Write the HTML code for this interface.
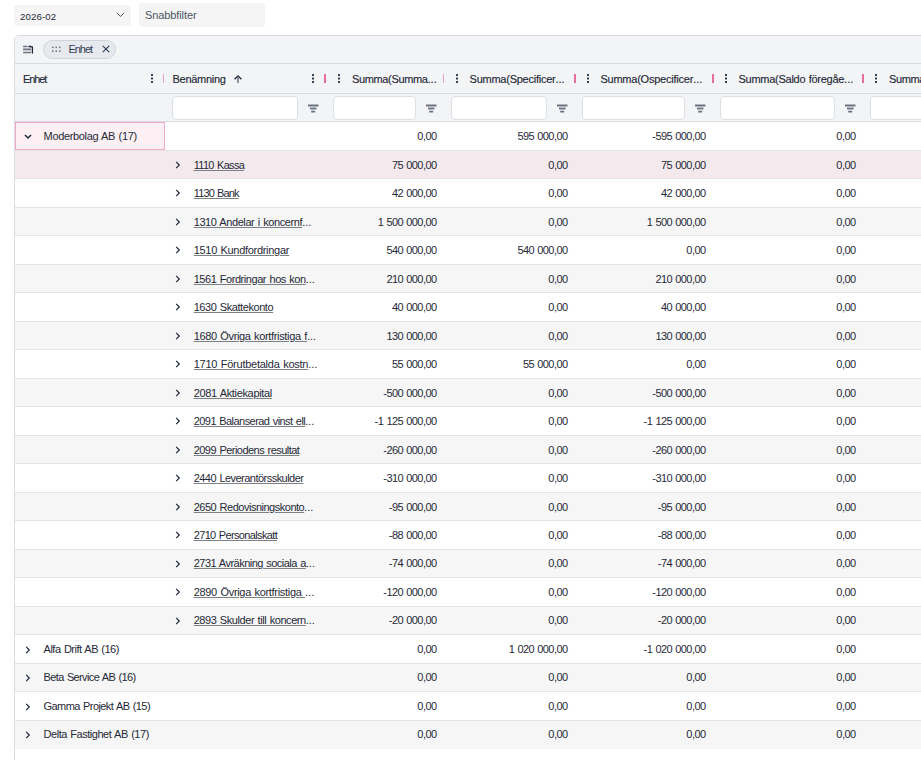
<!DOCTYPE html><html><head><meta charset="utf-8"><style>
*{box-sizing:border-box;margin:0;padding:0}
html,body{width:921px;height:760px;overflow:hidden;background:#fff}
body{position:relative;font-family:"Liberation Sans",sans-serif;color:#1f2937}
.a{position:absolute}
.sel{left:14px;top:5px;width:117px;height:21px;background:#f5f5f5;border-radius:3px}
.sel span{position:absolute;left:6px;top:5.9px;font-size:9.6px;line-height:12px;color:#1f2937}
.qf{left:139px;top:3px;width:126px;height:24px;background:#f5f5f5;border-radius:3px}
.qf span{position:absolute;left:6px;top:6px;font-size:11px;line-height:13px;color:#4b5563}
.grid{left:14px;top:35px;width:940px;height:760px;border:1px solid #d9dce0;border-radius:5px 0 0 0;background:#fff;overflow:hidden}
.bar{left:0;width:100%;background:#f3f4f6;border-bottom:1px solid #d9dce0}
.chip{left:27.8px;top:3.8px;width:72.8px;height:18.8px;border:1px solid #cfd4da;background:#e6e9ed;border-radius:10px}
.hd{font-size:11px;line-height:13px;color:#1f2937;-webkit-text-stroke:0.15px #1f2937;white-space:nowrap;word-spacing:0.6px}
.fin{top:60px;height:24px;background:#fff;border:1px solid #dcdfe3;border-radius:4px}
.row{left:0;width:100%;border-bottom:1px solid #e3e5e9}
.odd{background:#f6f6f6}
.last{border-bottom:0}
.hov{background:#f4e9ed}
.t{font-size:11px;line-height:13px;white-space:nowrap;color:#1f2937;word-spacing:0.8px}
.u{text-decoration:underline;text-decoration-color:#7b8089;text-underline-offset:1px}
.pk{width:2px;height:9px;background:#e86d9f}
</style></head><body>
<div class="a sel"><span style="letter-spacing:0.166px;">2026-02</span><svg class="a" style="left:102px;top:7px" width="9" height="6" viewBox="0 0 9 6"><path d="M0.8 0.9 L4.5 4.4 L8.2 0.9" fill="none" stroke="#3b4658" stroke-width="0.9"/></svg></div>
<div class="a qf"><span style="letter-spacing:-0.100px;">Snabbfilter</span></div>
<div class="a grid">
<div class="a bar" style="top:0;height:28.00px">
<svg class="a" style="left:7.9px;top:8.5px" width="12" height="10" viewBox="0 0 12 10"><path d="M0.1 1.5H3.9" stroke="#6b7280" stroke-width="1.7"/><path d="M3.9 1.5H6" stroke="#9aa1ab" stroke-width="1.5"/><path d="M0.1 4.4H8M0.1 7.5H8" stroke="#6b7280" stroke-width="1.7"/><circle cx="6.8" cy="1.5" r="0.9" fill="#1e293b"/><path d="M6.8 1.3L9.4 2V8" fill="none" stroke="#1e293b" stroke-width="1.3" stroke-linecap="round"/></svg>
<div class="a chip">
<svg class="a" style="left:8.4px;top:5.1px" width="9" height="7" viewBox="0 0 9 7"><g fill="#6b7280"><rect x="0" y="0.6" width="1.5" height="1.5"/><rect x="3.5" y="0.6" width="1.5" height="1.5"/><rect x="7" y="0.6" width="1.5" height="1.5"/><rect x="0" y="4.4" width="1.5" height="1.5"/><rect x="3.5" y="4.4" width="1.5" height="1.5"/><rect x="7" y="4.4" width="1.5" height="1.5"/></g></svg>
<span class="a t" style="left:24.7px;top:2.3px;color:#334155;letter-spacing:-1.050px;">Enhet</span>
<svg class="a" style="left:58.2px;top:3.9px" width="8" height="8" viewBox="0 0 8 8"><path d="M0.8 0.8L7.2 7.2M7.2 0.8L0.8 7.2" stroke="#334155" stroke-width="1.2"/></svg>
</div></div>
<div class="a bar" style="top:28.00px;height:29.50px"></div>
<span class="a hd" style="left:8.00px;top:37.00px;letter-spacing:-1.104px;">Enhet</span>
<svg class="a" style="left:136.00px;top:38.00px" width="2" height="9" viewBox="0 0 2 9"><g fill="#334155"><rect x="0" y="0" width="2" height="2"/><rect x="0" y="3.5" width="2" height="2"/><rect x="0" y="7" width="2" height="2"/></g></svg>
<div class="a pk" style="left:148.00px;top:38.00px;width:1px;background:#eba3c0"></div>
<span class="a hd" style="left:157.50px;top:37.00px;letter-spacing:-0.274px;">Benämning</span>
<svg class="a" style="left:219.00px;top:38.80px" width="8" height="9" viewBox="0 0 8 9"><path d="M0.6 4.3L4 0.9L7.4 4.3" fill="none" stroke="#1e293b" stroke-width="1.3"/><path d="M4 1.5V8" stroke="#6b7280" stroke-width="1.5"/></svg>
<svg class="a" style="left:296.80px;top:38.00px" width="2" height="9" viewBox="0 0 2 9"><g fill="#334155"><rect x="0" y="0" width="2" height="2"/><rect x="0" y="3.5" width="2" height="2"/><rect x="0" y="7" width="2" height="2"/></g></svg>
<div class="a pk" style="left:309.00px;top:38.00px"></div>
<svg class="a" style="left:322.80px;top:38.00px" width="2" height="9" viewBox="0 0 2 9"><g fill="#334155"><rect x="0" y="0" width="2" height="2"/><rect x="0" y="3.5" width="2" height="2"/><rect x="0" y="7" width="2" height="2"/></g></svg>
<span class="a hd" style="left:337.00px;top:37.00px;letter-spacing:-0.355px;">Summa(Summa<span style="letter-spacing:0">...</span></span>
<div class="a pk" style="left:427.50px;top:38.00px;width:1px;background:#eba3c0"></div>
<svg class="a" style="left:440.80px;top:38.00px" width="2" height="9" viewBox="0 0 2 9"><g fill="#334155"><rect x="0" y="0" width="2" height="2"/><rect x="0" y="3.5" width="2" height="2"/><rect x="0" y="7" width="2" height="2"/></g></svg>
<span class="a hd" style="left:454.60px;top:37.00px;letter-spacing:-0.252px;">Summa(Specificer<span style="letter-spacing:0">...</span></span>
<div class="a pk" style="left:558.50px;top:38.00px"></div>
<svg class="a" style="left:571.80px;top:38.00px" width="2" height="9" viewBox="0 0 2 9"><g fill="#334155"><rect x="0" y="0" width="2" height="2"/><rect x="0" y="3.5" width="2" height="2"/><rect x="0" y="7" width="2" height="2"/></g></svg>
<span class="a hd" style="left:585.40px;top:37.00px;letter-spacing:-0.223px;">Summa(Ospecificer<span style="letter-spacing:0">...</span></span>
<div class="a pk" style="left:696.50px;top:38.00px"></div>
<svg class="a" style="left:709.80px;top:38.00px" width="2" height="9" viewBox="0 0 2 9"><g fill="#334155"><rect x="0" y="0" width="2" height="2"/><rect x="0" y="3.5" width="2" height="2"/><rect x="0" y="7" width="2" height="2"/></g></svg>
<span class="a hd" style="left:723.50px;top:37.00px;letter-spacing:-0.267px;">Summa(Saldo föregåe<span style="letter-spacing:0">...</span></span>
<div class="a pk" style="left:846.50px;top:38.00px"></div>
<svg class="a" style="left:859.80px;top:38.00px" width="2" height="9" viewBox="0 0 2 9"><g fill="#334155"><rect x="0" y="0" width="2" height="2"/><rect x="0" y="3.5" width="2" height="2"/><rect x="0" y="7" width="2" height="2"/></g></svg>
<span class="a hd" style="left:874.00px;top:37.00px;letter-spacing:-0.400px;">Summa(Saldo</span>
<div class="a bar" style="top:57.50px;height:28.50px"></div>
<div class="a fin" style="left:157.00px;width:125.50px"></div>
<svg class="a" style="left:292.50px;top:67.50px" width="11" height="9" viewBox="0 0 11 9"><g fill="#6b7280"><rect x="0" y="0.5" width="10.5" height="2"/><rect x="2" y="3.6" width="6.5" height="1.8"/><rect x="3.2" y="6.7" width="4" height="1.8"/></g></svg>
<div class="a fin" style="left:318.00px;width:82.50px"></div>
<svg class="a" style="left:410.50px;top:67.50px" width="11" height="9" viewBox="0 0 11 9"><g fill="#6b7280"><rect x="0" y="0.5" width="10.5" height="2"/><rect x="2" y="3.6" width="6.5" height="1.8"/><rect x="3.2" y="6.7" width="4" height="1.8"/></g></svg>
<div class="a fin" style="left:436.00px;width:95.50px"></div>
<svg class="a" style="left:541.50px;top:67.50px" width="11" height="9" viewBox="0 0 11 9"><g fill="#6b7280"><rect x="0" y="0.5" width="10.5" height="2"/><rect x="2" y="3.6" width="6.5" height="1.8"/><rect x="3.2" y="6.7" width="4" height="1.8"/></g></svg>
<div class="a fin" style="left:567.00px;width:102.50px"></div>
<svg class="a" style="left:679.50px;top:67.50px" width="11" height="9" viewBox="0 0 11 9"><g fill="#6b7280"><rect x="0" y="0.5" width="10.5" height="2"/><rect x="2" y="3.6" width="6.5" height="1.8"/><rect x="3.2" y="6.7" width="4" height="1.8"/></g></svg>
<div class="a fin" style="left:705.00px;width:114.50px"></div>
<svg class="a" style="left:829.50px;top:67.50px" width="11" height="9" viewBox="0 0 11 9"><g fill="#6b7280"><rect x="0" y="0.5" width="10.5" height="2"/><rect x="2" y="3.6" width="6.5" height="1.8"/><rect x="3.2" y="6.7" width="4" height="1.8"/></g></svg>
<div class="a fin" style="left:855.00px;width:114.50px"></div>
<svg class="a" style="left:979.50px;top:67.50px" width="11" height="9" viewBox="0 0 11 9"><g fill="#6b7280"><rect x="0" y="0.5" width="10.5" height="2"/><rect x="2" y="3.6" width="6.5" height="1.8"/><rect x="3.2" y="6.7" width="4" height="1.8"/></g></svg>
<div class="a row" style="top:86.00px;height:29px">
<div class="a" style="left:0;top:0;width:150px;height:28px;background:#fcf0f4;border:1px solid #eeaac7"></div>
<svg class="a" style="left:9px;top:12.00px" width="8" height="6" viewBox="0 0 8 6"><path d="M1 1L4 4L7 1" fill="none" stroke="#1e293b" stroke-width="1.5"/></svg>
<span class="a t" style="left:28.60px;top:8.14px;letter-spacing:-0.348px;">Moderbolag AB (17)</span>
<span class="a t" style="right:517.00px;top:8.14px;letter-spacing:-0.55px;word-spacing:0.6px;margin-right:-0.55px">0,00</span>
<span class="a t" style="right:386.00px;top:8.14px;letter-spacing:-0.55px;word-spacing:0.6px;margin-right:-0.55px">595 000,00</span>
<span class="a t" style="right:248.00px;top:8.14px;letter-spacing:-0.55px;word-spacing:0.6px;margin-right:-0.55px">-595 000,00</span>
<span class="a t" style="right:98.00px;top:8.14px;letter-spacing:-0.55px;word-spacing:0.6px;margin-right:-0.55px">0,00</span>
<span class="a t" style="left:985.00px;top:8.14px">0,00</span>
</div>
<div class="a row hov" style="top:115.00px;height:28px">
<svg class="a" style="left:159.80px;top:9.99px" width="6" height="8" viewBox="0 0 6 8"><path d="M1.2 0.8L4.3 4L1.2 7.2" fill="none" stroke="#1e293b" stroke-width="1.2"/></svg>
<span class="a t" style="left:178.70px;top:7.63px;letter-spacing:-0.680px;"><span class="u">1110 Kassa</span></span>
<span class="a t" style="right:517.00px;top:7.63px;letter-spacing:-0.55px;word-spacing:0.6px;margin-right:-0.55px">75 000,00</span>
<span class="a t" style="right:386.00px;top:7.63px;letter-spacing:-0.55px;word-spacing:0.6px;margin-right:-0.55px">0,00</span>
<span class="a t" style="right:248.00px;top:7.63px;letter-spacing:-0.55px;word-spacing:0.6px;margin-right:-0.55px">75 000,00</span>
<span class="a t" style="right:98.00px;top:7.63px;letter-spacing:-0.55px;word-spacing:0.6px;margin-right:-0.55px">0,00</span>
<span class="a t" style="left:985.00px;top:7.63px">0,00</span>
</div>
<div class="a row" style="top:143.00px;height:29px">
<svg class="a" style="left:159.80px;top:10.48px" width="6" height="8" viewBox="0 0 6 8"><path d="M1.2 0.8L4.3 4L1.2 7.2" fill="none" stroke="#1e293b" stroke-width="1.2"/></svg>
<span class="a t" style="left:178.70px;top:8.12px;letter-spacing:-0.850px;"><span class="u">1130 Bank</span></span>
<span class="a t" style="right:517.00px;top:8.12px;letter-spacing:-0.55px;word-spacing:0.6px;margin-right:-0.55px">42 000,00</span>
<span class="a t" style="right:386.00px;top:8.12px;letter-spacing:-0.55px;word-spacing:0.6px;margin-right:-0.55px">0,00</span>
<span class="a t" style="right:248.00px;top:8.12px;letter-spacing:-0.55px;word-spacing:0.6px;margin-right:-0.55px">42 000,00</span>
<span class="a t" style="right:98.00px;top:8.12px;letter-spacing:-0.55px;word-spacing:0.6px;margin-right:-0.55px">0,00</span>
<span class="a t" style="left:985.00px;top:8.12px">0,00</span>
</div>
<div class="a row odd" style="top:172.00px;height:28px">
<svg class="a" style="left:159.80px;top:9.97px" width="6" height="8" viewBox="0 0 6 8"><path d="M1.2 0.8L4.3 4L1.2 7.2" fill="none" stroke="#1e293b" stroke-width="1.2"/></svg>
<span class="a t" style="left:178.70px;top:7.61px;letter-spacing:-0.414px;"><span class="u">1310 Andelar i koncernf</span><span style="letter-spacing:0">...</span></span>
<span class="a t" style="right:517.00px;top:7.61px;letter-spacing:-0.55px;word-spacing:0.6px;margin-right:-0.55px">1 500 000,00</span>
<span class="a t" style="right:386.00px;top:7.61px;letter-spacing:-0.55px;word-spacing:0.6px;margin-right:-0.55px">0,00</span>
<span class="a t" style="right:248.00px;top:7.61px;letter-spacing:-0.55px;word-spacing:0.6px;margin-right:-0.55px">1 500 000,00</span>
<span class="a t" style="right:98.00px;top:7.61px;letter-spacing:-0.55px;word-spacing:0.6px;margin-right:-0.55px">0,00</span>
<span class="a t" style="left:985.00px;top:7.61px">0,00</span>
</div>
<div class="a row" style="top:200.00px;height:29px">
<svg class="a" style="left:159.80px;top:10.46px" width="6" height="8" viewBox="0 0 6 8"><path d="M1.2 0.8L4.3 4L1.2 7.2" fill="none" stroke="#1e293b" stroke-width="1.2"/></svg>
<span class="a t" style="left:178.70px;top:8.10px;letter-spacing:-0.300px;"><span class="u">1510 Kundfordringar</span></span>
<span class="a t" style="right:517.00px;top:8.10px;letter-spacing:-0.55px;word-spacing:0.6px;margin-right:-0.55px">540 000,00</span>
<span class="a t" style="right:386.00px;top:8.10px;letter-spacing:-0.55px;word-spacing:0.6px;margin-right:-0.55px">540 000,00</span>
<span class="a t" style="right:248.00px;top:8.10px;letter-spacing:-0.55px;word-spacing:0.6px;margin-right:-0.55px">0,00</span>
<span class="a t" style="right:98.00px;top:8.10px;letter-spacing:-0.55px;word-spacing:0.6px;margin-right:-0.55px">0,00</span>
<span class="a t" style="left:985.00px;top:8.10px">0,00</span>
</div>
<div class="a row odd" style="top:229.00px;height:28px">
<svg class="a" style="left:159.80px;top:9.95px" width="6" height="8" viewBox="0 0 6 8"><path d="M1.2 0.8L4.3 4L1.2 7.2" fill="none" stroke="#1e293b" stroke-width="1.2"/></svg>
<span class="a t" style="left:178.70px;top:7.59px;letter-spacing:-0.446px;"><span class="u">1561 Fordringar hos kon</span><span style="letter-spacing:0">...</span></span>
<span class="a t" style="right:517.00px;top:7.59px;letter-spacing:-0.55px;word-spacing:0.6px;margin-right:-0.55px">210 000,00</span>
<span class="a t" style="right:386.00px;top:7.59px;letter-spacing:-0.55px;word-spacing:0.6px;margin-right:-0.55px">0,00</span>
<span class="a t" style="right:248.00px;top:7.59px;letter-spacing:-0.55px;word-spacing:0.6px;margin-right:-0.55px">210 000,00</span>
<span class="a t" style="right:98.00px;top:7.59px;letter-spacing:-0.55px;word-spacing:0.6px;margin-right:-0.55px">0,00</span>
<span class="a t" style="left:985.00px;top:7.59px">0,00</span>
</div>
<div class="a row" style="top:257.00px;height:29px">
<svg class="a" style="left:159.80px;top:10.44px" width="6" height="8" viewBox="0 0 6 8"><path d="M1.2 0.8L4.3 4L1.2 7.2" fill="none" stroke="#1e293b" stroke-width="1.2"/></svg>
<span class="a t" style="left:178.70px;top:8.08px;letter-spacing:-0.434px;"><span class="u">1630 Skattekonto</span></span>
<span class="a t" style="right:517.00px;top:8.08px;letter-spacing:-0.55px;word-spacing:0.6px;margin-right:-0.55px">40 000,00</span>
<span class="a t" style="right:386.00px;top:8.08px;letter-spacing:-0.55px;word-spacing:0.6px;margin-right:-0.55px">0,00</span>
<span class="a t" style="right:248.00px;top:8.08px;letter-spacing:-0.55px;word-spacing:0.6px;margin-right:-0.55px">40 000,00</span>
<span class="a t" style="right:98.00px;top:8.08px;letter-spacing:-0.55px;word-spacing:0.6px;margin-right:-0.55px">0,00</span>
<span class="a t" style="left:985.00px;top:8.08px">0,00</span>
</div>
<div class="a row odd" style="top:286.00px;height:28px">
<svg class="a" style="left:159.80px;top:9.93px" width="6" height="8" viewBox="0 0 6 8"><path d="M1.2 0.8L4.3 4L1.2 7.2" fill="none" stroke="#1e293b" stroke-width="1.2"/></svg>
<span class="a t" style="left:178.70px;top:7.57px;letter-spacing:-0.346px;"><span class="u">1680 Övriga kortfristiga f</span><span style="letter-spacing:0">...</span></span>
<span class="a t" style="right:517.00px;top:7.57px;letter-spacing:-0.55px;word-spacing:0.6px;margin-right:-0.55px">130 000,00</span>
<span class="a t" style="right:386.00px;top:7.57px;letter-spacing:-0.55px;word-spacing:0.6px;margin-right:-0.55px">0,00</span>
<span class="a t" style="right:248.00px;top:7.57px;letter-spacing:-0.55px;word-spacing:0.6px;margin-right:-0.55px">130 000,00</span>
<span class="a t" style="right:98.00px;top:7.57px;letter-spacing:-0.55px;word-spacing:0.6px;margin-right:-0.55px">0,00</span>
<span class="a t" style="left:985.00px;top:7.57px">0,00</span>
</div>
<div class="a row" style="top:314.00px;height:29px">
<svg class="a" style="left:159.80px;top:10.42px" width="6" height="8" viewBox="0 0 6 8"><path d="M1.2 0.8L4.3 4L1.2 7.2" fill="none" stroke="#1e293b" stroke-width="1.2"/></svg>
<span class="a t" style="left:178.70px;top:8.06px;letter-spacing:-0.249px;"><span class="u">1710 Förutbetalda kostn</span><span style="letter-spacing:0">...</span></span>
<span class="a t" style="right:517.00px;top:8.06px;letter-spacing:-0.55px;word-spacing:0.6px;margin-right:-0.55px">55 000,00</span>
<span class="a t" style="right:386.00px;top:8.06px;letter-spacing:-0.55px;word-spacing:0.6px;margin-right:-0.55px">55 000,00</span>
<span class="a t" style="right:248.00px;top:8.06px;letter-spacing:-0.55px;word-spacing:0.6px;margin-right:-0.55px">0,00</span>
<span class="a t" style="right:98.00px;top:8.06px;letter-spacing:-0.55px;word-spacing:0.6px;margin-right:-0.55px">0,00</span>
<span class="a t" style="left:985.00px;top:8.06px">0,00</span>
</div>
<div class="a row odd" style="top:343.00px;height:28px">
<svg class="a" style="left:159.80px;top:9.91px" width="6" height="8" viewBox="0 0 6 8"><path d="M1.2 0.8L4.3 4L1.2 7.2" fill="none" stroke="#1e293b" stroke-width="1.2"/></svg>
<span class="a t" style="left:178.70px;top:7.55px;letter-spacing:-0.340px;"><span class="u">2081 Aktiekapital</span></span>
<span class="a t" style="right:517.00px;top:7.55px;letter-spacing:-0.55px;word-spacing:0.6px;margin-right:-0.55px">-500 000,00</span>
<span class="a t" style="right:386.00px;top:7.55px;letter-spacing:-0.55px;word-spacing:0.6px;margin-right:-0.55px">0,00</span>
<span class="a t" style="right:248.00px;top:7.55px;letter-spacing:-0.55px;word-spacing:0.6px;margin-right:-0.55px">-500 000,00</span>
<span class="a t" style="right:98.00px;top:7.55px;letter-spacing:-0.55px;word-spacing:0.6px;margin-right:-0.55px">0,00</span>
<span class="a t" style="left:985.00px;top:7.55px">0,00</span>
</div>
<div class="a row" style="top:371.00px;height:29px">
<svg class="a" style="left:159.80px;top:10.40px" width="6" height="8" viewBox="0 0 6 8"><path d="M1.2 0.8L4.3 4L1.2 7.2" fill="none" stroke="#1e293b" stroke-width="1.2"/></svg>
<span class="a t" style="left:178.70px;top:8.04px;letter-spacing:-0.552px;"><span class="u">2091 Balanserad vinst ell</span><span style="letter-spacing:0">...</span></span>
<span class="a t" style="right:517.00px;top:8.04px;letter-spacing:-0.55px;word-spacing:0.6px;margin-right:-0.55px">-1 125 000,00</span>
<span class="a t" style="right:386.00px;top:8.04px;letter-spacing:-0.55px;word-spacing:0.6px;margin-right:-0.55px">0,00</span>
<span class="a t" style="right:248.00px;top:8.04px;letter-spacing:-0.55px;word-spacing:0.6px;margin-right:-0.55px">-1 125 000,00</span>
<span class="a t" style="right:98.00px;top:8.04px;letter-spacing:-0.55px;word-spacing:0.6px;margin-right:-0.55px">0,00</span>
<span class="a t" style="left:985.00px;top:8.04px">0,00</span>
</div>
<div class="a row odd" style="top:400.00px;height:28px">
<svg class="a" style="left:159.80px;top:9.89px" width="6" height="8" viewBox="0 0 6 8"><path d="M1.2 0.8L4.3 4L1.2 7.2" fill="none" stroke="#1e293b" stroke-width="1.2"/></svg>
<span class="a t" style="left:178.70px;top:7.53px;letter-spacing:-0.526px;"><span class="u">2099 Periodens resultat</span></span>
<span class="a t" style="right:517.00px;top:7.53px;letter-spacing:-0.55px;word-spacing:0.6px;margin-right:-0.55px">-260 000,00</span>
<span class="a t" style="right:386.00px;top:7.53px;letter-spacing:-0.55px;word-spacing:0.6px;margin-right:-0.55px">0,00</span>
<span class="a t" style="right:248.00px;top:7.53px;letter-spacing:-0.55px;word-spacing:0.6px;margin-right:-0.55px">-260 000,00</span>
<span class="a t" style="right:98.00px;top:7.53px;letter-spacing:-0.55px;word-spacing:0.6px;margin-right:-0.55px">0,00</span>
<span class="a t" style="left:985.00px;top:7.53px">0,00</span>
</div>
<div class="a row" style="top:428.00px;height:29px">
<svg class="a" style="left:159.80px;top:10.38px" width="6" height="8" viewBox="0 0 6 8"><path d="M1.2 0.8L4.3 4L1.2 7.2" fill="none" stroke="#1e293b" stroke-width="1.2"/></svg>
<span class="a t" style="left:178.70px;top:8.02px;letter-spacing:-0.527px;"><span class="u">2440 Leverantörsskulder</span></span>
<span class="a t" style="right:517.00px;top:8.02px;letter-spacing:-0.55px;word-spacing:0.6px;margin-right:-0.55px">-310 000,00</span>
<span class="a t" style="right:386.00px;top:8.02px;letter-spacing:-0.55px;word-spacing:0.6px;margin-right:-0.55px">0,00</span>
<span class="a t" style="right:248.00px;top:8.02px;letter-spacing:-0.55px;word-spacing:0.6px;margin-right:-0.55px">-310 000,00</span>
<span class="a t" style="right:98.00px;top:8.02px;letter-spacing:-0.55px;word-spacing:0.6px;margin-right:-0.55px">0,00</span>
<span class="a t" style="left:985.00px;top:8.02px">0,00</span>
</div>
<div class="a row odd" style="top:457.00px;height:28px">
<svg class="a" style="left:159.80px;top:9.87px" width="6" height="8" viewBox="0 0 6 8"><path d="M1.2 0.8L4.3 4L1.2 7.2" fill="none" stroke="#1e293b" stroke-width="1.2"/></svg>
<span class="a t" style="left:178.70px;top:7.51px;letter-spacing:-0.489px;"><span class="u">2650 Redovisningskonto</span><span style="letter-spacing:0">...</span></span>
<span class="a t" style="right:517.00px;top:7.51px;letter-spacing:-0.55px;word-spacing:0.6px;margin-right:-0.55px">-95 000,00</span>
<span class="a t" style="right:386.00px;top:7.51px;letter-spacing:-0.55px;word-spacing:0.6px;margin-right:-0.55px">0,00</span>
<span class="a t" style="right:248.00px;top:7.51px;letter-spacing:-0.55px;word-spacing:0.6px;margin-right:-0.55px">-95 000,00</span>
<span class="a t" style="right:98.00px;top:7.51px;letter-spacing:-0.55px;word-spacing:0.6px;margin-right:-0.55px">0,00</span>
<span class="a t" style="left:985.00px;top:7.51px">0,00</span>
</div>
<div class="a row" style="top:485.00px;height:29px">
<svg class="a" style="left:159.80px;top:10.36px" width="6" height="8" viewBox="0 0 6 8"><path d="M1.2 0.8L4.3 4L1.2 7.2" fill="none" stroke="#1e293b" stroke-width="1.2"/></svg>
<span class="a t" style="left:178.70px;top:8.00px;letter-spacing:-0.640px;"><span class="u">2710 Personalskatt</span></span>
<span class="a t" style="right:517.00px;top:8.00px;letter-spacing:-0.55px;word-spacing:0.6px;margin-right:-0.55px">-88 000,00</span>
<span class="a t" style="right:386.00px;top:8.00px;letter-spacing:-0.55px;word-spacing:0.6px;margin-right:-0.55px">0,00</span>
<span class="a t" style="right:248.00px;top:8.00px;letter-spacing:-0.55px;word-spacing:0.6px;margin-right:-0.55px">-88 000,00</span>
<span class="a t" style="right:98.00px;top:8.00px;letter-spacing:-0.55px;word-spacing:0.6px;margin-right:-0.55px">0,00</span>
<span class="a t" style="left:985.00px;top:8.00px">0,00</span>
</div>
<div class="a row odd" style="top:514.00px;height:28px">
<svg class="a" style="left:159.80px;top:9.85px" width="6" height="8" viewBox="0 0 6 8"><path d="M1.2 0.8L4.3 4L1.2 7.2" fill="none" stroke="#1e293b" stroke-width="1.2"/></svg>
<span class="a t" style="left:178.70px;top:7.49px;letter-spacing:-0.516px;"><span class="u">2731 Avräkning sociala a</span><span style="letter-spacing:0">...</span></span>
<span class="a t" style="right:517.00px;top:7.49px;letter-spacing:-0.55px;word-spacing:0.6px;margin-right:-0.55px">-74 000,00</span>
<span class="a t" style="right:386.00px;top:7.49px;letter-spacing:-0.55px;word-spacing:0.6px;margin-right:-0.55px">0,00</span>
<span class="a t" style="right:248.00px;top:7.49px;letter-spacing:-0.55px;word-spacing:0.6px;margin-right:-0.55px">-74 000,00</span>
<span class="a t" style="right:98.00px;top:7.49px;letter-spacing:-0.55px;word-spacing:0.6px;margin-right:-0.55px">0,00</span>
<span class="a t" style="left:985.00px;top:7.49px">0,00</span>
</div>
<div class="a row" style="top:542.00px;height:29px">
<svg class="a" style="left:159.80px;top:10.34px" width="6" height="8" viewBox="0 0 6 8"><path d="M1.2 0.8L4.3 4L1.2 7.2" fill="none" stroke="#1e293b" stroke-width="1.2"/></svg>
<span class="a t" style="left:178.70px;top:7.98px;letter-spacing:-0.312px;"><span class="u">2890 Övriga kortfristiga </span><span style="letter-spacing:0">...</span></span>
<span class="a t" style="right:517.00px;top:7.98px;letter-spacing:-0.55px;word-spacing:0.6px;margin-right:-0.55px">-120 000,00</span>
<span class="a t" style="right:386.00px;top:7.98px;letter-spacing:-0.55px;word-spacing:0.6px;margin-right:-0.55px">0,00</span>
<span class="a t" style="right:248.00px;top:7.98px;letter-spacing:-0.55px;word-spacing:0.6px;margin-right:-0.55px">-120 000,00</span>
<span class="a t" style="right:98.00px;top:7.98px;letter-spacing:-0.55px;word-spacing:0.6px;margin-right:-0.55px">0,00</span>
<span class="a t" style="left:985.00px;top:7.98px">0,00</span>
</div>
<div class="a row odd" style="top:571.00px;height:28px">
<svg class="a" style="left:159.80px;top:9.83px" width="6" height="8" viewBox="0 0 6 8"><path d="M1.2 0.8L4.3 4L1.2 7.2" fill="none" stroke="#1e293b" stroke-width="1.2"/></svg>
<span class="a t" style="left:178.70px;top:7.47px;letter-spacing:-0.432px;"><span class="u">2893 Skulder till koncern</span><span style="letter-spacing:0">...</span></span>
<span class="a t" style="right:517.00px;top:7.47px;letter-spacing:-0.55px;word-spacing:0.6px;margin-right:-0.55px">-20 000,00</span>
<span class="a t" style="right:386.00px;top:7.47px;letter-spacing:-0.55px;word-spacing:0.6px;margin-right:-0.55px">0,00</span>
<span class="a t" style="right:248.00px;top:7.47px;letter-spacing:-0.55px;word-spacing:0.6px;margin-right:-0.55px">-20 000,00</span>
<span class="a t" style="right:98.00px;top:7.47px;letter-spacing:-0.55px;word-spacing:0.6px;margin-right:-0.55px">0,00</span>
<span class="a t" style="left:985.00px;top:7.47px">0,00</span>
</div>
<div class="a row" style="top:599.00px;height:29px">
<svg class="a" style="left:10.2px;top:10.82px" width="6" height="8" viewBox="0 0 6 8"><path d="M1.2 0.8L4.3 4L1.2 7.2" fill="none" stroke="#1e293b" stroke-width="1.2"/></svg>
<span class="a t" style="left:28.60px;top:7.96px;letter-spacing:-0.502px;">Alfa Drift AB (16)</span>
<span class="a t" style="right:517.00px;top:7.96px;letter-spacing:-0.55px;word-spacing:0.6px;margin-right:-0.55px">0,00</span>
<span class="a t" style="right:386.00px;top:7.96px;letter-spacing:-0.55px;word-spacing:0.6px;margin-right:-0.55px">1 020 000,00</span>
<span class="a t" style="right:248.00px;top:7.96px;letter-spacing:-0.55px;word-spacing:0.6px;margin-right:-0.55px">-1 020 000,00</span>
<span class="a t" style="right:98.00px;top:7.96px;letter-spacing:-0.55px;word-spacing:0.6px;margin-right:-0.55px">0,00</span>
<span class="a t" style="left:985.00px;top:7.96px">0,00</span>
</div>
<div class="a row odd" style="top:628.00px;height:28px">
<svg class="a" style="left:10.2px;top:10.31px" width="6" height="8" viewBox="0 0 6 8"><path d="M1.2 0.8L4.3 4L1.2 7.2" fill="none" stroke="#1e293b" stroke-width="1.2"/></svg>
<span class="a t" style="left:28.60px;top:7.45px;letter-spacing:-0.634px;">Beta Service AB (16)</span>
<span class="a t" style="right:517.00px;top:7.45px;letter-spacing:-0.55px;word-spacing:0.6px;margin-right:-0.55px">0,00</span>
<span class="a t" style="right:386.00px;top:7.45px;letter-spacing:-0.55px;word-spacing:0.6px;margin-right:-0.55px">0,00</span>
<span class="a t" style="right:248.00px;top:7.45px;letter-spacing:-0.55px;word-spacing:0.6px;margin-right:-0.55px">0,00</span>
<span class="a t" style="right:98.00px;top:7.45px;letter-spacing:-0.55px;word-spacing:0.6px;margin-right:-0.55px">0,00</span>
<span class="a t" style="left:985.00px;top:7.45px">0,00</span>
</div>
<div class="a row" style="top:656.00px;height:29px">
<svg class="a" style="left:10.2px;top:10.80px" width="6" height="8" viewBox="0 0 6 8"><path d="M1.2 0.8L4.3 4L1.2 7.2" fill="none" stroke="#1e293b" stroke-width="1.2"/></svg>
<span class="a t" style="left:28.60px;top:7.94px;letter-spacing:-0.580px;">Gamma Projekt AB (15)</span>
<span class="a t" style="right:517.00px;top:7.94px;letter-spacing:-0.55px;word-spacing:0.6px;margin-right:-0.55px">0,00</span>
<span class="a t" style="right:386.00px;top:7.94px;letter-spacing:-0.55px;word-spacing:0.6px;margin-right:-0.55px">0,00</span>
<span class="a t" style="right:248.00px;top:7.94px;letter-spacing:-0.55px;word-spacing:0.6px;margin-right:-0.55px">0,00</span>
<span class="a t" style="right:98.00px;top:7.94px;letter-spacing:-0.55px;word-spacing:0.6px;margin-right:-0.55px">0,00</span>
<span class="a t" style="left:985.00px;top:7.94px">0,00</span>
</div>
<div class="a row odd last" style="top:685.00px;height:28px">
<svg class="a" style="left:10.2px;top:10.29px" width="6" height="8" viewBox="0 0 6 8"><path d="M1.2 0.8L4.3 4L1.2 7.2" fill="none" stroke="#1e293b" stroke-width="1.2"/></svg>
<span class="a t" style="left:28.60px;top:7.43px;letter-spacing:-0.473px;">Delta Fastighet AB (17)</span>
<span class="a t" style="right:517.00px;top:7.43px;letter-spacing:-0.55px;word-spacing:0.6px;margin-right:-0.55px">0,00</span>
<span class="a t" style="right:386.00px;top:7.43px;letter-spacing:-0.55px;word-spacing:0.6px;margin-right:-0.55px">0,00</span>
<span class="a t" style="right:248.00px;top:7.43px;letter-spacing:-0.55px;word-spacing:0.6px;margin-right:-0.55px">0,00</span>
<span class="a t" style="right:98.00px;top:7.43px;letter-spacing:-0.55px;word-spacing:0.6px;margin-right:-0.55px">0,00</span>
<span class="a t" style="left:985.00px;top:7.43px">0,00</span>
</div>
</div></body></html>
